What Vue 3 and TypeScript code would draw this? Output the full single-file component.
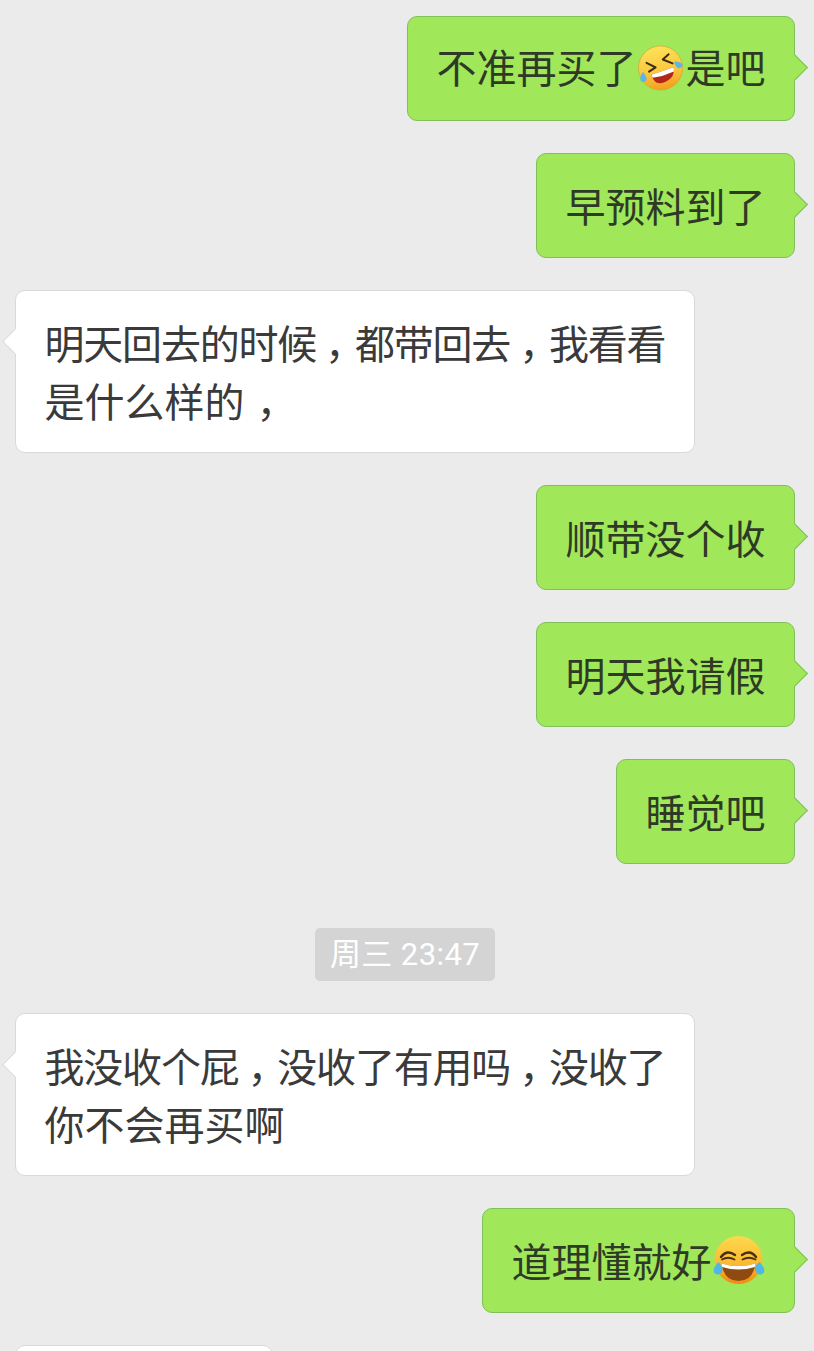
<script setup lang="ts">
type Msg = { kind: 'me' | 'other' | 'time' | 'stub'; lines: string[] }

// "[rofl]" and "[joy]" mark the inline emoji; "，" gets its own cell.
const messages: Msg[] = [
  { kind: 'me', lines: ['不准再买了[rofl]是吧'] },
  { kind: 'me', lines: ['早预料到了'] },
  { kind: 'other', lines: ['明天回去的时候，都带回去，我看看', '是什么样的，'] },
  { kind: 'me', lines: ['顺带没个收'] },
  { kind: 'me', lines: ['明天我请假'] },
  { kind: 'me', lines: ['睡觉吧'] },
  { kind: 'time', lines: ['周三 23:47'] },
  { kind: 'other', lines: ['我没收个屁，没收了有用吗，没收了', '你不会再买啊'] },
  { kind: 'me', lines: ['道理懂就好[joy]'] },
  { kind: 'stub', lines: [] },
]

function tokens(line: string): string[] {
  return line.split(/(\[rofl\]|\[joy\]|，)/).filter((t) => t !== '')
}

// Full lines are squeezed a little by the chat's text layout.
function isFull(line: string): boolean {
  return line.length >= 16
}
</script>

<template>
  <div class="chat">
    <template v-for="(m, i) in messages" :key="i">
      <div v-if="m.kind === 'time'" class="time-row">
        <span class="time">{{ m.lines[0] }}</span>
      </div>
      <div v-else class="row" :class="m.kind === 'me' ? 'row-me' : 'row-other'">
        <div class="bubble" :class="m.kind">
          <div
            v-for="(line, j) in m.lines"
            :key="j"
            class="line"
            :class="{ full: isFull(line), raised: line.includes('[rofl]') }"
          >
            <template v-for="(t, k) in tokens(line)" :key="k">
              <svg v-if="t === '[rofl]'" class="emoji" viewBox="0 0 50 50" aria-label="笑哭">
                <defs>
                  <linearGradient id="roflFace" x1="0.4" y1="0" x2="0.6" y2="1">
                    <stop offset="0" stop-color="#fde25a" />
                    <stop offset="0.55" stop-color="#fbc83e" />
                    <stop offset="1" stop-color="#f49c1e" />
                  </linearGradient>
                </defs>
                <circle cx="24" cy="25" r="22.5" fill="url(#roflFace)" stroke="#dd9a2a" stroke-width="0.6" />
                <path d="M9.7 19.7 L19 24.3 L12.3 28.7" fill="none" stroke="#3a2a14" stroke-width="2" stroke-linecap="round" stroke-linejoin="round" />
                <path d="M32.3 11 L26.3 16.3 L36.3 20.3" fill="none" stroke="#3a2a14" stroke-width="2" stroke-linecap="round" stroke-linejoin="round" />
                <path d="M14.7 32 L37.3 24.3 Q38.5 31 34.7 35.3 Q27 42.5 19.7 39.7 Q16 37.5 14.7 32 Z" fill="#b3261a" />
                <path d="M14.7 32 L37.3 24.3 Q38 26.5 37.6 28.5 Q27 33.5 16 35 Z" fill="#ffffff" />
                <path d="M6 29 Q10.5 34 9.6 37.5 Q7 41 4 38.5 Q1.8 35 6 29 Z" fill="#58b8ea" />
                <path d="M38 18.5 Q43.5 18 46.5 21.5 Q46 25.5 42.5 25.3 Q39 24 38 18.5 Z" fill="#58b8ea" />
              </svg>
              <svg v-else-if="t === '[joy]'" class="emoji emoji-joy" viewBox="0 0 54 50" aria-label="笑哭">
                <defs>
                  <linearGradient id="joyFace" x1="0.5" y1="0" x2="0.5" y2="1">
                    <stop offset="0" stop-color="#fdd94e" />
                    <stop offset="0.6" stop-color="#fbb92f" />
                    <stop offset="1" stop-color="#ee8a14" />
                  </linearGradient>
                </defs>
                <circle cx="26.5" cy="25" r="24" fill="url(#joyFace)" />
                <path d="M9 22 Q15 14 23 20" fill="none" stroke="#4a3012" stroke-width="2.4" stroke-linecap="round" />
                <path d="M10 24.5 Q16 21 22.5 24.5" fill="none" stroke="#4a3012" stroke-width="1.8" stroke-linecap="round" />
                <path d="M30 20 Q38 14 44 22" fill="none" stroke="#4a3012" stroke-width="2.4" stroke-linecap="round" />
                <path d="M30.5 24.5 Q37 21 43.5 24.5" fill="none" stroke="#4a3012" stroke-width="1.8" stroke-linecap="round" />
                <path d="M9.5 28.5 Q26.5 33.5 43.5 28.5 Q41 46 26.5 46 Q12 46 9.5 28.5 Z" fill="#8f4a10" />
                <path d="M9.5 28.5 Q26.5 33.5 43.5 28.5 L42.8 32 Q26.5 37 10.2 32 Z" fill="#ffffff" />
                <path d="M6.5 27 Q11 32 10.5 36.5 Q7.5 41 3 38.5 Q-1 35 6.5 27 Z" fill="#4fb7e6" />
                <path d="M47.5 27 Q41 32 43.5 36.5 Q46.5 41 51 38.5 Q55 35 47.5 27 Z" fill="#4fb7e6" />
              </svg>
              <span v-else-if="t === '，'" class="comma">，</span>
              <span v-else>{{ t }}</span>
            </template>
          </div>
        </div>
      </div>
    </template>
  </div>
</template>

<style scoped>
.chat {
  width: 814px;
  height: 1351px;
  overflow: hidden;
  box-sizing: border-box;
  padding: 16px 19px 0 15px;
  background: #ebebeb;
  display: flex;
  flex-direction: column;
  gap: 32px;
  font-family: "Noto Sans CJK SC", "Noto Sans", sans-serif;
}
.row {
  display: flex;
  flex-shrink: 0;
}
.row-me {
  justify-content: flex-end;
}
.row-other {
  justify-content: flex-start;
}
.bubble {
  position: relative;
  box-sizing: border-box;
  padding: 22px 28.5px 23px;
  border-radius: 10px;
  border: 1px solid;
  font-size: 40px;
  line-height: 58px;
  flex-shrink: 0;
}
.bubble::after {
  content: "";
  position: absolute;
  top: 41px;
  width: 18px;
  height: 18px;
  transform: rotate(45deg);
  background: inherit;
  border-style: solid;
  border-color: inherit;
  border-width: 0;
}
.me {
  background: #a0e75a;
  border-color: #7fc05a;
  color: #2f3a26;
}
.me::after {
  right: -10px;
  border-top-width: 1px;
  border-right-width: 1px;
}
.other {
  background: #ffffff;
  border-color: #d9d9d9;
  color: #3a3a3a;
}
.other::after {
  left: -10px;
  border-bottom-width: 1px;
  border-left-width: 1px;
}
.stub {
  width: 258px;
  height: 105px;
  background: #ffffff;
  border-color: #d9d9d9;
}
.line {
  display: flex;
  align-items: center;
  white-space: nowrap;
  height: 58px;
}
.line.raised {
  margin-top: -2px;
  margin-bottom: 2px;
}
.line.full {
  letter-spacing: -1.2px;
}
.comma {
  padding-left: 12px;
  letter-spacing: -12px;
  flex-shrink: 0;
}
.line.full .comma {
  padding-left: 9px;
  letter-spacing: -10.2px;
}
.emoji {
  width: 49px;
  height: 50px;
  flex-shrink: 0;
  margin-top: 4px;
}
.emoji-joy {
  width: 54px;
  margin-top: 0;
}
.time-row {
  display: flex;
  justify-content: center;
  flex-shrink: 0;
  margin-top: 32px;
}
.time {
  box-sizing: border-box;
  height: 53px;
  width: 180px;
  text-align: center;
  line-height: 53px;
  border-radius: 5px;
  background: #d4d4d4;
  color: #ffffff;
  font-size: 31px;
  letter-spacing: 0.4px;
  font-family: Roboto, "Noto Sans CJK SC", sans-serif;
}
</style>
